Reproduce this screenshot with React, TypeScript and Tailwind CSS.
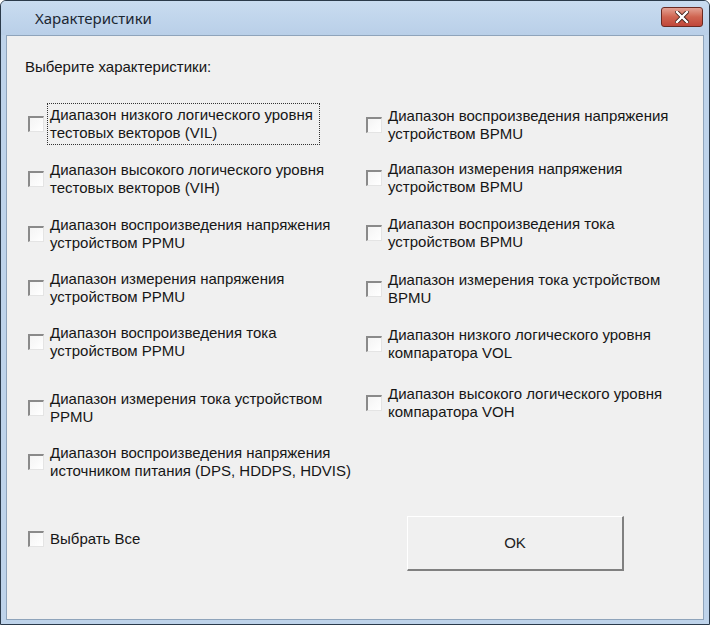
import React from 'react';

// Характеристики — WinForms-style dialog with two columns of checkboxes

type Item = { lines: [string, string]; mt: string };

const leftItems: Item[] = [
  { lines: ['Диапазон низкого логического уровня', 'тестовых векторов (VIL)'], mt: 'mt-[30px]' },
  { lines: ['Диапазон высокого логического уровня', 'тестовых векторов (VIH)'], mt: 'mt-[19px]' },
  { lines: ['Диапазон воспроизведения напряжения', 'устройством PPMU'], mt: 'mt-[19px]' },
  { lines: ['Диапазон измерения напряжения', 'устройством PPMU'], mt: 'mt-[18px]' },
  { lines: ['Диапазон воспроизведения тока', 'устройством PPMU'], mt: 'mt-[18px]' },
  { lines: ['Диапазон измерения тока устройством', 'PPMU'], mt: 'mt-[30px]' },
  { lines: ['Диапазон воспроизведения напряжения', 'источником питания (DPS, HDDPS, HDVIS)'], mt: 'mt-[18px]' },
];

const rightItems: Item[] = [
  { lines: ['Диапазон воспроизведения напряжения', 'устройством BPMU'], mt: 'mt-[31px]' },
  { lines: ['Диапазон измерения напряжения', 'устройством BPMU'], mt: 'mt-[17px]' },
  { lines: ['Диапазон воспроизведения тока', 'устройством BPMU'], mt: 'mt-[19px]' },
  { lines: ['Диапазон измерения тока устройством', 'BPMU'], mt: 'mt-[20px]' },
  { lines: ['Диапазон низкого логического уровня', 'компаратора VOL'], mt: 'mt-[19px]' },
  { lines: ['Диапазон высокого логического уровня', 'компаратора VOH'], mt: 'mt-[23px]' },
];

function Box() {
  return (
    <span className="block w-[16px] h-[16px] shrink-0 bg-gradient-to-br from-[#f4f4f4] to-white border-t-2 border-l-2 border-t-[#8a8a8a] border-l-[#8a8a8a] border-b border-r border-b-[#e4e4e4] border-r-[#e4e4e4]" />
  );
}

function Option({ item, focused }: { item: Item; focused?: boolean }) {
  return (
    <div className={`flex items-center ${item.mt}`}>
      <Box />
      <div
        className={`ml-[4px] px-[2px] leading-[18px] ${
          focused ? 'outline outline-1 outline-dotted outline-[#333] py-[2px] -my-[2px] pr-[6px]' : ''
        }`}
      >
        <div>{item.lines[0]}</div>
        <div>{item.lines[1]}</div>
      </div>
    </div>
  );
}

export default function App() {
  return (
    <div className="w-[710px] h-[625px] bg-[#bed3ea] border border-[#2b3a4a] rounded-t-[6px] flex flex-col overflow-hidden">
      {/* title bar */}
      <div className="h-[34px] shrink-0 flex items-center justify-between pl-[34px] pr-[6px] bg-gradient-to-b from-[#c9dcf0] to-[#b9cfe8]">
        <span className="text-[15px] text-[#1c2733] font-['Noto_Sans',sans-serif] mt-[1px]">Характеристики</span>
        <div className="w-[42px] h-[20px] -mt-[2px] rounded-[3px] border border-[#6b2a22] bg-gradient-to-b from-[#e3a193] via-[#cf6450] to-[#c0463a] flex items-center justify-center">
          <svg width="14" height="12" viewBox="0 0 14 12">
            <path d="M2 1 L12 11 M12 1 L2 11" stroke="#3a1a14" strokeWidth="4" strokeLinecap="square" />
            <path d="M2 1 L12 11 M12 1 L2 11" stroke="#ffffff" strokeWidth="2.4" strokeLinecap="square" />
          </svg>
        </div>
      </div>

      {/* client area */}
      <div className="flex-1 mx-[5px] mb-[4px] bg-[#f0f0f0] border border-[#8fa4bb] text-[15px] text-[#161616] font-['Liberation_Sans',Arial,sans-serif] px-[18px] pt-[22px]">
        <div className="leading-[18px]">Выберите характеристики:</div>
        <div className="flex">
          <div className="w-[341px] shrink-0 pl-[3px]">
            {leftItems.map((it, i) => (
              <Option key={i} item={it} focused={i === 0} />
            ))}
          </div>
          <div className="flex-1">
            {rightItems.map((it, i) => (
              <Option key={i} item={it} />
            ))}
          </div>
        </div>
        <div className="flex items-center justify-between mt-[36px]">
          <div className="flex items-center pl-[3px] mt-[-9px]">
            <Box />
            <span className="ml-[6px]">Выбрать Все</span>
          </div>
          <button className="w-[217px] h-[55px] mr-[61px] bg-[#f0f0f0] border border-t-white border-l-white border-b-2 border-r-2 border-b-[#808080] border-r-[#808080] text-[15px] text-[#222]">
            OK
          </button>
        </div>
      </div>
    </div>
  );
}
